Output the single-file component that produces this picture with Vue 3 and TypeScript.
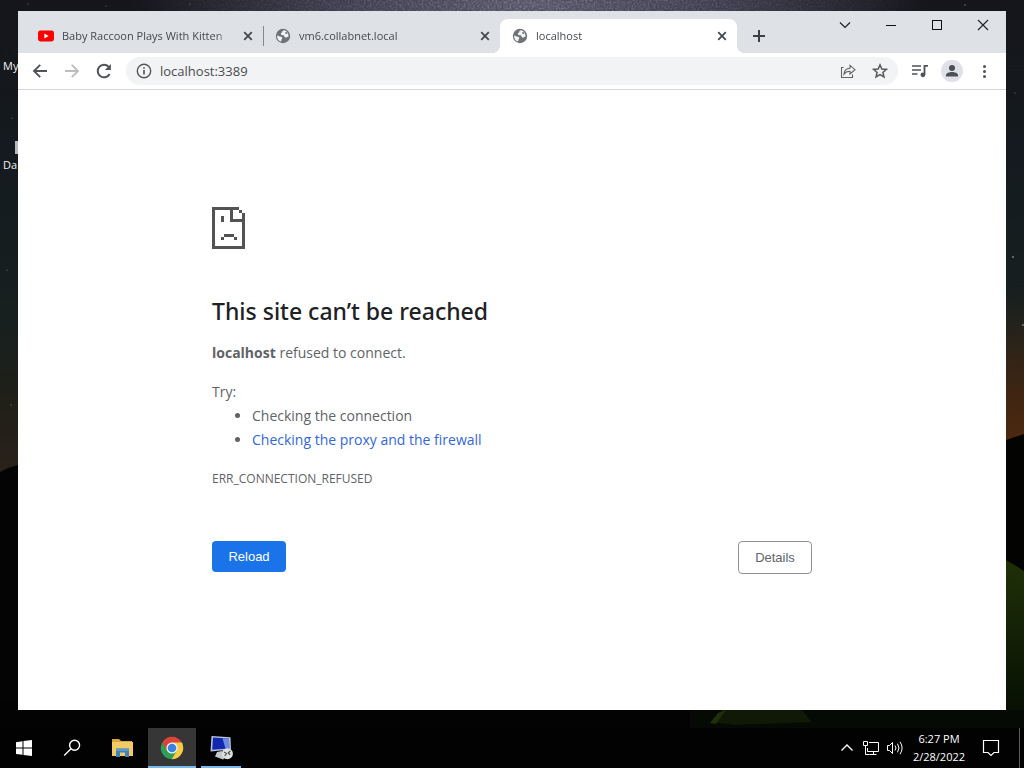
<script setup lang="ts">
import { ref } from 'vue'

interface Tab {
  id: number
  title: string
  icon: 'video' | 'globe'
}

const tabs: Tab[] = [
  { id: 1, title: 'Baby Raccoon Plays With Kitten', icon: 'video' },
  { id: 2, title: 'vm6.collabnet.local', icon: 'globe' },
  { id: 3, title: 'localhost', icon: 'globe' },
]
const activeTab = ref(3)
const address = ref('localhost:3389')
</script>

<template>
  <div class="desktop">
    <svg class="wallpaper" viewBox="0 0 1024 768" preserveAspectRatio="none" aria-hidden="true">
      <defs>
        <linearGradient id="sky" x1="0" y1="0" x2="0" y2="1">
          <stop offset="0" stop-color="#15161b" />
          <stop offset="0.2" stop-color="#141a1f" />
          <stop offset="0.42" stop-color="#17201f" />
          <stop offset="0.52" stop-color="#201f18" />
          <stop offset="0.61" stop-color="#29221b" />
        </linearGradient>
        <radialGradient id="milky" cx="0.5" cy="0.5" r="0.5">
          <stop offset="0" stop-color="#57566a" />
          <stop offset="0.5" stop-color="#3c3c4c" />
          <stop offset="1" stop-color="#3c3c4c" stop-opacity="0" />
        </radialGradient>
        <linearGradient id="dusk" x1="0" y1="0" x2="0" y2="1">
          <stop offset="0" stop-color="#4a2a12" stop-opacity="0" />
          <stop offset="1" stop-color="#4d280f" />
        </linearGradient>
        <linearGradient id="grass" x1="0" y1="0" x2="0" y2="1">
          <stop offset="0" stop-color="#1f3008" />
          <stop offset="1" stop-color="#071003" />
        </linearGradient>
        <linearGradient id="fade">
          <stop offset="0" stop-color="#000" />
          <stop offset="0.5" stop-color="#777" />
          <stop offset="1" stop-color="#000" />
        </linearGradient>
        <mask id="band">
          <rect x="130" width="800" height="11" fill="url(#fade)" />
        </mask>
        <filter id="grain" x="0" y="0" width="1" height="1">
          <feTurbulence type="fractalNoise" baseFrequency="0.5" numOctaves="2" seed="4" />
          <feColorMatrix values="0 0 0 0 0.6  0 0 0 0 0.6  0 0 0 0 0.7  1.6 0 0 0 -0.6" />
        </filter>
      </defs>
      <rect width="1024" height="768" fill="url(#sky)" />
      <ellipse cx="530" cy="4" rx="400" ry="60" fill="url(#milky)" />
      <g mask="url(#band)">
        <rect x="130" width="800" height="11" filter="url(#grain)" />
      </g>
      <rect x="1000" y="290" width="24" height="150" fill="url(#dusk)" />
      <path d="M0 472 L8 468 L18 465 V768 H0Z" fill="#040404" />
      <path d="M1006 440 L1024 434 V768 H1006Z" fill="#030302" />
      <rect y="700" width="1024" height="68" fill="#020302" />
      <path d="M1006 560 L1024 571 V712 H1006Z" fill="url(#grass)" />
      <path d="M690 710 H1024 V728 H690Z" fill="#060a04" />
      <path d="M722 710 H802 L812 722 L735 725 L712 722Z" fill="#0f1905" />
      <path d="M718 713 L726 710 L716 724 L710 723Z" fill="#1f300a" />
      <g fill="#7d8184">
        <circle cx="1013" cy="257" r="1" /><circle cx="1023" cy="325" r="1" />
        <circle cx="7" cy="270" r="0.6" /><circle cx="11" cy="405" r="0.6" />
        <circle cx="28" cy="4" r="0.6" /><circle cx="106" cy="6" r="0.6" />
        <circle cx="12" cy="118" r="0.6" /><circle cx="965" cy="5" r="0.7" />
        <circle cx="1015" cy="93" r="0.6" /><circle cx="190" cy="4" r="0.6" />
      </g>
      <rect x="15" y="141" width="3" height="13" fill="#b9babd" />
    </svg>

    <span class="shortcut shortcut-first">My</span>
    <span class="shortcut shortcut-second">Da</span>

    <main class="workspace">
      <section class="browser">
        <header class="tab-strip">
          <div
            v-for="tab in tabs"
            :key="tab.id"
            class="tab"
            :class="{ active: tab.id === activeTab }"
          >
            <button class="tab-label" type="button" @click="activeTab = tab.id">
              <svg v-if="tab.icon === 'video'" class="favicon" viewBox="0 0 16 16" aria-hidden="true">
                <rect y="2.5" width="16" height="11" rx="2.4" fill="#f00" />
                <path d="M6.4 5.6 L10.6 8 L6.4 10.4Z" fill="#fff" />
              </svg>
              <svg v-else class="favicon" viewBox="0 0 16 16" aria-hidden="true">
                <circle cx="8" cy="8" r="7.2" fill="#6f7377" />
                <path
                  d="M9.3 2.2 C7.6 2.4 7 3.3 7.2 4.4 C5.9 4.6 5.6 5.4 6.1 6.4 C6.6 7.3 8 7 8.8 7.2 C9.5 7.6 9.2 8.9 10.1 9.4 C11.2 9.8 12.3 8.7 13.6 8.7 C13.5 5.4 11.9 2.8 9.3 2.2Z"
                  fill="#f1f3f4"
                />
                <path
                  d="M2.1 7.4 C3.6 7.6 4.5 8.5 6 8.8 C7.2 9.1 7.6 10 6.9 10.9 C6.2 11.7 6.6 12.6 5.9 13.6 C3.5 12.7 1.9 10.5 2.1 7.4Z"
                  fill="#f1f3f4"
                />
                <path d="M10.1 4.2 L12 4.2 L12.2 6 L10.6 6.1Z" fill="#6f7377" />
              </svg>
              <span class="tab-title">{{ tab.title }}</span>
            </button>
            <button class="tab-close" type="button" aria-label="Close tab">
              <svg viewBox="0 0 16 16"><path d="M4.2 4.2 L11.8 11.8 M11.8 4.2 L4.2 11.8" stroke="#45494d" stroke-width="1.8" /></svg>
            </button>
          </div>
          <button class="new-tab" type="button" aria-label="New tab">
            <svg viewBox="0 0 16 16"><path d="M8 2 V14 M2 8 H14" stroke="#3c4043" stroke-width="2" /></svg>
          </button>
          <div class="window-controls">
            <button type="button" aria-label="Search tabs">
              <svg viewBox="0 0 16 16"><path d="M3 5.5 L8 10.5 L13 5.5" fill="none" stroke="#222" stroke-width="1.2" /></svg>
            </button>
            <button type="button" aria-label="Minimize">
              <svg viewBox="0 0 16 16"><path d="M3 8.5 H13" stroke="#111" /></svg>
            </button>
            <button type="button" aria-label="Maximize">
              <svg viewBox="0 0 16 16"><rect x="3.5" y="3.5" width="9" height="9" fill="none" stroke="#111" /></svg>
            </button>
            <button type="button" aria-label="Close">
              <svg viewBox="0 0 16 16"><path d="M3 3 L13 13 M13 3 L3 13" stroke="#222" stroke-width="1.1" /></svg>
            </button>
          </div>
        </header>

        <nav class="toolbar">
          <button class="tool" type="button" aria-label="Back">
            <svg viewBox="0 0 20 20"><path d="M17 10 H4.5 M10.2 3.8 L4 10 L10.2 16.2" fill="none" stroke="#505357" stroke-width="1.9" /></svg>
          </button>
          <button class="tool" type="button" aria-label="Forward" disabled>
            <svg viewBox="0 0 20 20"><path d="M3 10 H15.5 M9.8 3.8 L16 10 L9.8 16.2" fill="none" stroke="#bbbdbf" stroke-width="1.9" /></svg>
          </button>
          <button class="tool" type="button" aria-label="Reload page">
            <svg viewBox="0 0 20 20">
              <path d="M15.6 13 A6.3 6.3 0 1 1 14.6 5.7" fill="none" stroke="#505357" stroke-width="2" />
              <path d="M16.9 3 V9 H10.9Z" fill="#505357" />
            </svg>
          </button>
          <div class="omnibox">
            <button class="tool site-info" type="button" aria-label="Site information">
              <svg viewBox="0 0 20 20">
                <circle cx="10" cy="10" r="6.7" fill="none" stroke="#55595d" stroke-width="1.4" />
                <path d="M10 9 V13.6 M10 6.2 V7.8" stroke="#55595d" stroke-width="1.7" />
              </svg>
            </button>
            <input v-model="address" class="address" type="text" aria-label="Address" spellcheck="false" />
            <button class="tool" type="button" aria-label="Share this page">
              <svg viewBox="0 0 20 20" fill="none" stroke="#606468" stroke-width="1.1">
                <path d="M5.5 6.5 H3.5 V16.5 H14.5 V13.5" />
                <path d="M6 13.2 C6.2 9.6 8.2 7.4 12 7.2 V4.4 L17 8.7 L12 13 V10.3 C9.2 10.2 7.3 11.2 6 13.2Z" />
              </svg>
            </button>
            <button class="tool" type="button" aria-label="Bookmark this page">
              <svg viewBox="0 0 20 20">
                <path d="M10 3.8 L11.8 8 L16.4 8.4 L12.9 11.4 L14 15.9 L10 13.5 L6 15.9 L7.1 11.4 L3.6 8.4 L8.2 8Z" fill="none" stroke="#55595d" stroke-width="1.5" />
              </svg>
            </button>
          </div>
          <button class="tool" type="button" aria-label="Control media">
            <svg viewBox="0 0 20 20">
              <path d="M2 5 H11 M2 9 H11 M2 13 H7.5" stroke="#505357" stroke-width="1.7" />
              <path d="M14.5 14 V4.9 H18" fill="none" stroke="#505357" stroke-width="1.8" />
              <circle cx="12.9" cy="13.8" r="2.4" fill="#505357" />
            </svg>
          </button>
          <button class="tool" type="button" aria-label="Profile">
            <svg class="avatar" viewBox="0 0 22 22">
              <circle cx="11" cy="11" r="11" fill="#dfe0e8" />
              <circle cx="11" cy="8" r="3" fill="#4b4f58" />
              <path d="M5 16.6 V15.2 C5 13 8.4 12.1 11 12.1 C13.6 12.1 17 13 17 15.2 V16.6Z" fill="#4b4f58" />
            </svg>
          </button>
          <button class="tool" type="button" aria-label="Browser menu">
            <svg viewBox="0 0 20 20" fill="#505357">
              <circle cx="10.5" cy="5.5" r="1.5" /><circle cx="10.5" cy="10.5" r="1.5" /><circle cx="10.5" cy="15.5" r="1.5" />
            </svg>
          </button>
        </nav>

        <article class="page">
          <div class="message">
            <svg class="sad-page" viewBox="0 0 33 42" shape-rendering="crispEdges" aria-hidden="true">
              <path
                fill="#535355"
                fill-rule="evenodd"
                d="M0 0H27V3H30V6H33V42H0Z M3 3V39H30V15H18V3Z M21 3H27V6H30V12H21Z"
              />
              <path fill="#535355" d="M9 9h3v6h-3Z M12 27h10v3h-10Z M9 30h3v3h-3Z M22 30h3v3h-3Z" />
            </svg>
            <h1>This site can’t be reached</h1>
            <p class="summary"><strong>localhost</strong> refused to connect.</p>
            <p class="try">Try:</p>
            <ul>
              <li>Checking the connection</li>
              <li><a href="#buttons">Checking the proxy and the firewall</a></li>
            </ul>
            <p class="code">ERR_CONNECTION_REFUSED</p>
            <div id="buttons" class="actions">
              <button class="reload" type="button">Reload</button>
              <button class="details" type="button">Details</button>
            </div>
          </div>
        </article>
      </section>
    </main>

    <footer class="taskbar">
      <button class="task" type="button" aria-label="Start">
        <svg viewBox="0 0 24 24" fill="#fff">
          <path d="M4 6.2 L10.5 5.2 V11.5 H4Z M11.5 5 L20 4 V11.5 H11.5Z M4 12.5 H10.5 V18.8 L4 17.9Z M11.5 12.5 H20 V20 L11.5 19Z" />
        </svg>
      </button>
      <button class="task" type="button" aria-label="Search">
        <svg viewBox="0 0 24 24" fill="none" stroke="#fff" stroke-width="1.4">
          <circle cx="14.6" cy="9.2" r="5" /><path d="M11 12.8 L4.2 19.6" />
        </svg>
      </button>
      <button class="task files" type="button" aria-label="File Explorer">
        <svg viewBox="0 0 24 24">
          <path d="M2 3 H9 L11 5 H22 V20 H2Z" fill="#d9a63a" />
          <path d="M2 6 H23 V20 H2Z" fill="#f3cb66" />
          <path d="M6 21 V12.6 H19 V21 H15 V16.5 H10 V21Z" fill="#3f83b9" />
          <path d="M6 12.6 H19 V15 H6Z" fill="#5b9bc9" />
        </svg>
      </button>
      <button class="task current" type="button" aria-label="Chrome">
        <svg viewBox="0 0 24 24">
          <path d="M12 12 L2.3 6.4 A11.2 11.2 0 0 1 21.7 6.4Z" fill="#db4437" />
          <path d="M12 12 L21.7 6.4 A11.2 11.2 0 0 1 12 23.2Z" fill="#f7cb45" />
          <path d="M12 12 L12 23.2 A11.2 11.2 0 0 1 2.3 6.4Z" fill="#2f9e56" />
          <path d="M12 6.4 H21.7 L22.6 8 L17 14.9Z" fill="#f7cb45" />
          <path d="M7 14.8 L2.3 6.4 L12 7Z" fill="#db4437" />
          <path d="M7.1 14.8 L12 12 L16.9 14.8 L12 23.2Z" fill="#2f9e56" />
          <path d="M16.9 14.8 L12 23.2 A11.2 11.2 0 0 0 20 19Z" fill="#f7cb45" />
          <circle cx="12" cy="12" r="5.6" fill="#f4f4f4" />
          <circle cx="12" cy="12" r="4.3" fill="#3b82e0" />
        </svg>
      </button>
      <button class="task running" type="button" aria-label="Remote Desktop">
        <svg viewBox="0 0 24 24">
          <path d="M2.5 0 L21.5 1.3 L22 13.5 L1.5 15.5Z" fill="#b9c6de" />
          <path d="M4 1.5 L20 2.6 L20.3 12.4 L3.2 13.8Z" fill="#1228ae" />
          <path d="M13.5 2.2 L20 2.6 L20.3 12.4 L16.5 12.8Z" fill="#6d8be0" />
          <path d="M8 16 L13 15 L14 18 L19 19.5 L14 23.4 L6 20.4Z" fill="#c5c9cb" />
          <circle cx="18.4" cy="17.7" r="5.5" fill="#dfe1df" />
          <path d="M15.2 16 L17.5 17.6 L15.6 20 M21.4 14.8 L19.2 17 L21.2 18.8" fill="none" stroke="#4b5052" stroke-width="1.2" />
        </svg>
      </button>

      <div class="tray">
        <button class="tray-icon" type="button" aria-label="Show hidden icons">
          <svg viewBox="0 0 20 20"><path d="M4.5 12.5 L10 7 L15.5 12.5" fill="none" stroke="#fff" stroke-width="1.4" /></svg>
        </button>
        <button class="tray-icon" type="button" aria-label="Network">
          <svg viewBox="0 0 20 20" fill="none" stroke="#fff">
            <path d="M8 4.5 H17.5 V13.5 H6.5 V10 M12.5 13.5 V16.5 M8.5 16.5 H15.5 M2.5 3.5 H6.5 V7.5 H2.5Z M4.5 7.5 V16.5 H8.5" />
          </svg>
        </button>
        <button class="tray-icon" type="button" aria-label="Volume">
          <svg viewBox="0 0 20 20" fill="none" stroke="#fff">
            <path d="M2.5 7.5 H4.5 L7.5 4.5 V15.5 L4.5 12.5 H2.5Z M10 7.5 Q12 10 10 12.5 M12.5 5.7 Q15.5 10 12.5 14.3 M15 3.8 Q19.2 10 15 16.2" />
          </svg>
        </button>
        <div class="clock">
          <time datetime="18:27">6:27 PM</time>
          <time datetime="2022-02-28">2/28/2022</time>
        </div>
        <button class="notifications" type="button" aria-label="Notifications">
          <svg viewBox="0 0 20 20"><path d="M2.5 2.5 H17.5 V14.5 H13 L10 17.5 L7 14.5 H2.5Z" fill="none" stroke="#fff" stroke-width="1.2" /></svg>
        </button>
        <button class="show-desktop" type="button" aria-label="Show desktop"></button>
      </div>
    </footer>
  </div>
</template>

<style>
body {
  margin: 0;
}
</style>

<style scoped>
* {
  box-sizing: border-box;
}

.desktop {
  position: relative;
  display: flex;
  flex-direction: column;
  min-height: 100vh;
  overflow: hidden;
  background: #030303;
  font-family: 'Open Sans', 'Noto Sans', sans-serif;
  font-size: 11px;
}

button {
  display: flex;
  align-items: center;
  justify-content: center;
  padding: 0;
  border: 0;
  background: none;
  font: inherit;
}

.wallpaper {
  position: absolute;
  inset: 0;
  width: 100%;
  height: 100%;
}

.shortcut {
  position: absolute;
  left: 3px;
  color: #f2f2f2;
  line-height: 16px;
}

.shortcut-first {
  top: 58px;
}

.shortcut-second {
  top: 157px;
}

.workspace {
  position: relative;
  display: flex;
  flex: 1;
  padding: 11px 18px 18px;
}

.browser {
  display: flex;
  flex: 1;
  flex-direction: column;
  min-width: 0;
  background: #fff;
}

.tab-strip {
  display: flex;
  align-items: flex-end;
  height: 42px;
  padding-left: 8px;
  background: #dee1e6;
}

.tab {
  position: relative;
  display: flex;
  flex: 0 1 237px;
  align-items: center;
  min-width: 0;
  height: 34px;
  padding: 0 7px 0 12px;
}

.tab:first-child::after {
  content: '';
  position: absolute;
  top: 7px;
  right: -1px;
  width: 1px;
  height: 20px;
  background: #85888c;
}

.tab.active {
  border-radius: 8px 8px 0 0;
  background: #fff;
}

.tab.active::before,
.tab.active::after {
  content: '';
  position: absolute;
  bottom: 0;
  width: 8px;
  height: 8px;
}

.tab.active::before {
  right: 100%;
  background: radial-gradient(circle at 0 0, transparent 8px, #fff 8px);
}

.tab.active::after {
  left: 100%;
  background: radial-gradient(circle at 100% 0, transparent 8px, #fff 8px);
}

.tab-label {
  flex: 1;
  justify-content: flex-start;
  gap: 8px;
  min-width: 0;
  color: #45494d;
  line-height: 14px;
}

.favicon {
  flex: none;
  width: 16px;
  height: 16px;
}

.tab-title {
  flex: 1;
  margin-right: 8px;
  overflow: hidden;
  text-align: left;
  white-space: nowrap;
  mask-image: linear-gradient(90deg, #000 calc(100% - 16px), transparent);
}

.tab-close,
.tab-close svg {
  flex: none;
  width: 16px;
  height: 16px;
}

.new-tab {
  width: 28px;
  height: 34px;
  margin-left: 8px;
}

.new-tab svg {
  width: 16px;
  height: 16px;
}

.window-controls {
  display: flex;
  align-self: flex-start;
  margin-left: auto;
}

.window-controls button {
  width: 46px;
  height: 28px;
}

.window-controls svg {
  width: 16px;
  height: 16px;
}

.toolbar {
  display: flex;
  align-items: center;
  gap: 4px;
  height: 37px;
  padding: 0 8px;
  border-bottom: 1px solid #d5d7da;
}

.tool {
  flex: none;
  width: 28px;
  height: 28px;
}

.tool svg {
  width: 20px;
  height: 20px;
}

.tool .avatar {
  width: 22px;
  height: 22px;
}

.omnibox {
  display: flex;
  flex: 1;
  align-items: center;
  gap: 4px;
  min-width: 0;
  height: 28px;
  margin: 0 4px;
  padding: 0 4px;
  border-radius: 14px;
  background: #f1f3f4;
}

.site-info {
  margin-right: -2px;
}

.address {
  flex: 1;
  min-width: 0;
  padding: 0;
  border: 0;
  outline: 0;
  background: none;
  color: #4a4d51;
  font-family: inherit;
  font-size: 13px;
}

.page {
  flex: 1;
  padding: 117px 24px 0;
  color: #5f6368;
  font-size: 14px;
  line-height: 24px;
}

.message {
  max-width: 600px;
  margin: 0 auto;
}

.sad-page {
  display: block;
  width: 33px;
  height: 42px;
}

h1 {
  margin: 48px 0 16px;
  color: #202124;
  font-family: 'Noto Sans', 'Open Sans', sans-serif;
  font-size: 23px;
  font-weight: 500;
  line-height: 28px;
}

p {
  margin: 0;
}

.try {
  margin-top: 15px;
}

ul {
  margin: 0;
  padding-left: 40px;
}

a {
  color: #3367d6;
  text-decoration: none;
}

.code {
  margin-top: 15px;
  font-size: 12px;
}

.actions {
  display: flex;
  align-items: flex-start;
  justify-content: space-between;
  margin-top: 50px;
}

.actions button {
  min-width: 74px;
  padding: 8px 16px;
  border-radius: 4px;
  font-family: 'Liberation Sans', Arial, sans-serif;
  font-size: 13px;
  line-height: 15px;
}

.actions .reload {
  background: #1a73e8;
  color: #fff;
}

.actions .details {
  border: 1px solid #8f9296;
  background: #fff;
  color: #5f6368;
}

.taskbar {
  position: relative;
  display: flex;
  height: 40px;
  background: #020202;
}

.task {
  width: 48px;
  height: 40px;
  border: solid transparent;
  border-width: 2px 0;
}

.task svg {
  width: 24px;
  height: 24px;
}

.task.files {
  width: 52px;
}

.task.current {
  border-color: #363636 transparent #76b9ed;
  background: #363636;
}

.task.running {
  width: 40px;
  margin-left: 5px;
  border-bottom-color: #76b9ed;
}

.tray {
  display: flex;
  align-items: center;
  margin-left: auto;
}

.tray-icon {
  width: 24px;
  height: 40px;
}

.tray-icon svg,
.notifications svg {
  width: 20px;
  height: 20px;
}

.clock {
  display: flex;
  flex-direction: column;
  align-items: center;
  width: 64px;
  color: #fff;
  line-height: 18px;
}

.notifications {
  width: 40px;
  height: 40px;
}

.show-desktop {
  width: 5px;
  height: 40px;
  margin-left: 8px;
  border-left: 1px solid #5c5c5c;
}
</style>
